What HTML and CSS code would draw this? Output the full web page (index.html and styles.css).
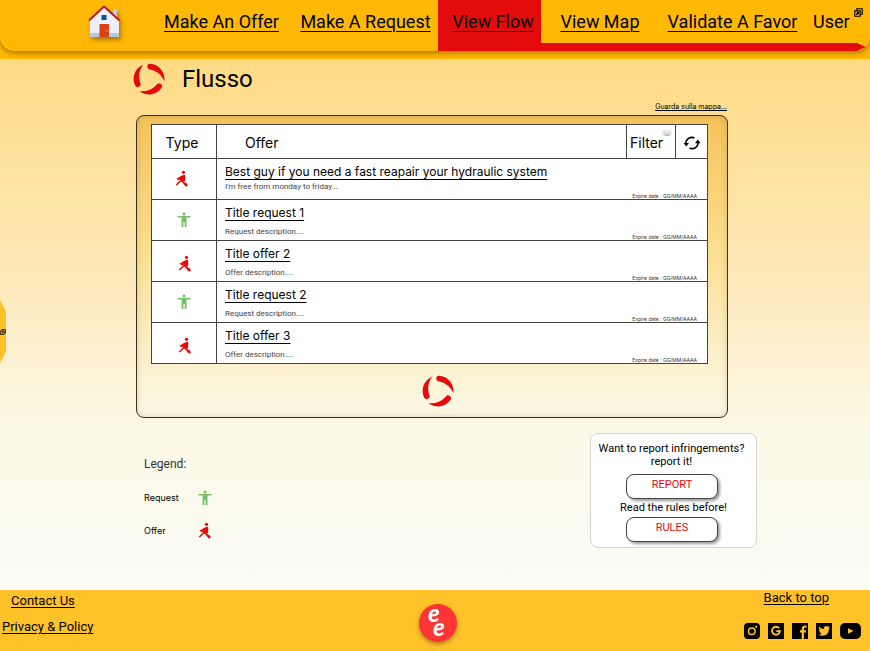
FILE: index.html
```html
<!DOCTYPE html>
<html lang="en">
<head>
<meta charset="utf-8">
<title>Flusso</title>
<link rel="stylesheet" href="styles.css">
</head>
<body>
<svg width="0" height="0" class="defs" aria-hidden="true">
  <symbol id="swirl" viewBox="0 0 32 32">
    <path id="blade" d="M17 .7A15.300 15.300 0 0 1 31.300 18Q27 8.800 17.500 6.500A2.900 2.900 0 0 1 17 .7Z"/>
    <use href="#blade" transform="rotate(120 16 16)"/>
    <use href="#blade" transform="rotate(240 16 16)"/>
  </symbol>
  <symbol id="person" viewBox="0 0 14 16">
    <circle cx="7" cy="2" r="1.500"/>
    <path d="M.5 4h13v1.500H9.500V15H7.700v-5H6.400v5H4.600V5.500H.5Z"/>
  </symbol>
  <symbol id="helper" viewBox="0 0 14 18">
    <circle cx="8.500" cy="2.300" r="1.600"/>
    <path d="M5.500 6.200 9 4.700Q10.200 4.600 10.200 6v4.500L9 11.500 5 9Z"/>
    <path d="M7 6.500 2.800 8.800 4.500 10M1.300 15 6 10.500" fill="none" stroke="currentColor" stroke-width="1.500"/>
    <path d="M4.700 8.600 11.200 15" fill="none" stroke="currentColor" stroke-width="1.800"/>
    <path d="M9 14.500 11 12.800 13 15.200 11 16.800Z"/>
  </symbol>
  <symbol id="windows" viewBox="0 0 8 8">
    <path d="M2.500 2V.7h4.800v4.800H6M.7 2.500h4.800v4.800H.7ZM2 6l2-2M2.500 4H4v1.500" fill="none" stroke="currentColor"/>
  </symbol>
</svg>

<header class="topbar">
  <nav class="nav">
    <a class="nav-item home" href="#" aria-label="Home">
      <svg width="34" height="36" viewBox="0 0 34 36">
        <path d="M25 4h4v10h-4Z" fill="#c2cae8"/>
        <path d="M2 15 16 2l15 13v17H2Z" fill="#edf0fb"/>
        <path d="M2 28h29v4H2Z" fill="#bcc5e4"/>
        <path d="M11.500 19h9.500v13h-9.500Z" fill="#d84315"/>
        <path d="M13.500 10h5v5h-5Z" fill="#01579b"/>
        <path d="M1 15.500 16 1.500l15.500 14" fill="none" stroke="#b71c1c" stroke-width="2"/>
        <circle cx="19" cy="26" r=".7" fill="#ffb74d"/>
      </svg>
    </a>
    <a class="nav-item" href="#">Make An Offer</a>
    <a class="nav-item" href="#">Make A Request</a>
    <a class="nav-item active" href="#">View Flow</a>
    <a class="nav-item lined" href="#">View Map</a>
    <a class="nav-item lined" href="#">Validate A Favor</a>
    <button class="nav-item last">User <svg width="9" height="9" class="mini"><use href="#windows"/></svg></button>
  </nav>
</header>

<button class="side-tab" aria-label="Open side menu"><svg width="6" height="6"><use href="#windows"/></svg></button>

<main class="content">
  <div class="heading">
    <svg class="swirl" width="32" height="32"><use href="#swirl"/></svg>
    <h1>Flusso</h1>
  </div>
  <a class="map-link" href="#">Guarda sulla mappa...</a>

  <section class="panel">
    <table class="flow">
      <colgroup><col class="c-type"><col><col class="c-filter"><col class="c-refresh"></colgroup>
      <thead>
        <tr>
          <th class="type-head">Type</th>
          <th class="offer-head">Offer</th>
          <th class="filter-cell"><button>Filter</button><i class="knob"></i></th>
          <th><button class="refresh" aria-label="Refresh">
            <svg width="18" height="14" viewBox="0 0 18 14" fill="none" stroke="#000" stroke-width="1.600">
              <path d="M3 7.500a6 5.500 0 0 1 8.500-5.600M15 6.500a6 5.500 0 0 1-8.500 5.600"/>
              <path d="M.5 7h5.500L3.200 10.500ZM12 7.200h5.500L14.800 3.500Z" fill="#000" stroke="none"/>
            </svg></button></th>
        </tr>
      </thead>
      <tbody>
        <tr><td class="type"><svg class="helper" width="14" height="18"><use href="#helper"/></svg></td>
          <td colspan="3"><div class="entry"><a href="#">Best guy if you need a fast reapair your hydraulic system</a><p class="near">I'm free from monday to friday...</p><small>Expire date : GG/MM/AAAA</small></div></td></tr>
        <tr><td class="type"><svg class="person" width="14" height="16"><use href="#person"/></svg></td>
          <td colspan="3"><div class="entry"><a href="#">Title request 1</a><p>Request description....</p><small>Expire date : GG/MM/AAAA</small></div></td></tr>
        <tr><td class="type low"><svg class="helper" width="14" height="18"><use href="#helper"/></svg></td>
          <td colspan="3"><div class="entry"><a href="#">Title offer 2</a><p>Offer description....</p><small>Expire date : GG/MM/AAAA</small></div></td></tr>
        <tr><td class="type"><svg class="person" width="14" height="16"><use href="#person"/></svg></td>
          <td colspan="3"><div class="entry"><a href="#">Title request 2</a><p>Request description....</p><small>Expire date : GG/MM/AAAA</small></div></td></tr>
        <tr><td class="type low"><svg class="helper" width="14" height="18"><use href="#helper"/></svg></td>
          <td colspan="3"><div class="entry"><a href="#">Title offer 3</a><p>Offer description....</p><small>Expire date : GG/MM/AAAA</small></div></td></tr>
      </tbody>
    </table>
    <svg class="swirl loader" width="32" height="32"><use href="#swirl"/></svg>
  </section>

  <div class="below">
    <section class="legend">
      <h2>Legend:</h2>
      <div class="legend-row"><span>Request</span><svg class="person" width="14" height="16"><use href="#person"/></svg></div>
      <div class="legend-row"><span>Offer</span><svg class="helper" width="14" height="18"><use href="#helper"/></svg></div>
    </section>
    <section class="report">
      <p class="question">Want to report infringements? report it!</p>
      <button>REPORT</button>
      <p>Read the rules before!</p>
      <button>RULES</button>
    </section>
  </div>
</main>

<footer class="footer">
  <div class="foot-links"><a class="contact" href="#">Contact Us</a><a href="#">Privacy &amp; Policy</a></div>
  <svg class="logo" width="38" height="42" viewBox="0 0 38 42">
    <circle cx="19" cy="19" r="19" fill="#ff3535"/>
    <text><tspan x="9" y="18">e</tspan><tspan x="14" y="32">e</tspan></text>
  </svg>
  <div class="foot-right">
    <a href="#">Back to top</a>
    <div class="social">
      <a href="#" aria-label="Instagram"><svg width="16" height="16" viewBox="0 0 16 16"><rect width="16" height="16" rx="4"/><circle cx="7.800" cy="8.200" r="3.300" fill="none" stroke="#ffc329" stroke-width="1.500"/><circle cx="12.200" cy="3.800" r="1.100" fill="#ffc329"/></svg></a>
      <a href="#" aria-label="Google"><svg width="16" height="16" viewBox="0 0 16 16"><rect width="16" height="16"/><path d="M11.200 5.300A4 4 0 1 0 12 8.200H8.300" fill="none" stroke="#ffc329" stroke-width="1.800"/></svg></a>
      <a href="#" aria-label="Facebook"><svg width="16" height="16" viewBox="0 0 16 16"><rect width="16" height="16"/><path d="M10.800 16V6q0-2.500 2.500-2.500h1.200M8 8.300h6" fill="none" stroke="#ffc329" stroke-width="2.200"/></svg></a>
      <a href="#" aria-label="Twitter"><svg width="16" height="16" viewBox="0 0 16 16"><rect width="16" height="16"/><path d="M3 3.500Q5.300 6 8 6 7.800 3 10.300 3 11.300 3 12 3.700L13.600 3.200 13 4.600 14 4.400 12.900 5.800Q12.800 12.600 6.500 12.700 4.500 12.700 2.700 11.700 4.700 11.700 5.700 10.800 4.200 10.700 3.700 9.300L4.700 9.200Q3 8.500 3 6.900L4 7.100Q2.300 5.700 3 3.500Z" fill="#ffc329"/></svg></a>
      <a href="#" aria-label="YouTube"><svg width="21" height="16" viewBox="0 0 21 16"><rect width="21" height="16" rx="5"/><path d="M8 5.200 13.500 8 8 10.800Z" fill="#ffc329"/></svg></a>
    </div>
  </div>
</footer>
</body>
</html>
```
FILE: styles.css
```css
* { box-sizing: border-box; }
body {
  margin: 0;
  min-height: 100vh;
  display: flex;
  flex-direction: column;
  font-family: Roboto, "Liberation Sans", sans-serif;
  color: #000;
  background: linear-gradient(#fdd675, #fdebc0 300px, #fbf8e7 430px, #fbfcf5 590px);
}
h1, h2, p { margin: 0; font-weight: 400; }
a { color: inherit; text-underline-offset: 2px; text-decoration-thickness: 1px; }
button { font: inherit; color: inherit; border: 0; background: none; padding: 0; cursor: pointer; }
svg { display: block; }
.defs { position: absolute; }

.topbar { height: 59px; background: #ffb703; }
.nav {
  height: 51px;
  display: grid;
  grid-template-columns: 150fr 143fr 145fr 103fr 118fr 147fr 64fr;
  background: #ffb905;
  border-radius: 0 0 14px 14px;
  box-shadow: 0 2px 5px rgba(80, 50, 0, .5);
  font-size: 18px;
  line-height: 22px;
}
.nav-item { padding-top: 11px; text-align: center; white-space: nowrap; text-underline-offset: 3px; }
.home { padding: 5px 0 0 88px; }
.home svg { filter: drop-shadow(2px 3px 2px rgba(90, 60, 0, .5)); }
.active { background: #e30b0b; padding-left: 7px; }
.lined { background: linear-gradient(#e30b0b, #e30b0b) bottom / 100% 8px no-repeat; }
.last {
  display: flex;
  align-items: flex-start;
  gap: 4px;
  padding-left: 7px;
  position: relative;
}
.last::after {
  content: "";
  position: absolute;
  left: 0;
  right: 4px;
  bottom: 0;
  height: 8px;
  background: #e30b0b;
  clip-path: polygon(0 0, calc(100% - 9px) 0, 100% 50%, calc(100% - 9px) 100%, 0 100%);
}
.mini { margin-top: -3px; }

.side-tab {
  position: absolute;
  left: 0;
  top: 300px;
  width: 6px;
  height: 63px;
  background: #ffc329;
  clip-path: polygon(0 0, 100% 18%, 100% 82%, 0 100%);
}

.content { flex: 1; padding: 4px 142px 0 136px; display: flex; flex-direction: column; }
.heading { display: flex; align-items: center; gap: 17px; height: 32px; margin-left: -3px; }
.heading h1 { font-size: 24px; line-height: 32px; }
.swirl { fill: #e30b0b; }
.map-link { align-self: flex-end; margin: 7px 1px 3px 0; font: 7px/10px Inter, sans-serif; text-underline-offset: 1px; }
.panel {
  border: 1px solid #39311f;
  border-radius: 8px;
  padding: 8px 19px 10px 14px;
  background: linear-gradient(#f5c25a, #fcdd8c 42%, #fbeec4 75%, #fbf8e7);
  box-shadow: inset 0 0 6px rgba(130, 90, 20, .25);
}
.flow {
  width: 100%;
  table-layout: fixed;
  border-collapse: collapse;
  background: #fff;
  font-family: Inter, sans-serif;
}
.c-type { width: 65px; }
.c-filter { width: 49px; }
.c-refresh { width: 32px; }
.flow th, .flow td { border: 1px solid #444; padding: 0; }
.flow th { height: 34px; padding-top: 2px; font-weight: 400; font-size: 14px; }
.flow .type-head { padding-right: 4px; }
.flow .offer-head { text-align: left; padding-left: 28px; }
.flow .filter-cell { position: relative; text-align: left; padding-left: 3px; }
.knob {
  position: absolute;
  right: 4px;
  top: 1px;
  width: 8px;
  height: 9px;
  border-radius: 0 0 4px 4px;
  background: linear-gradient(#fff 30%, #ccc);
  box-shadow: 0 1px 1px #999;
}
.refresh { display: block; margin: auto; }
.flow td { height: 41px; }
.type svg { margin: 0 auto; }
.type .helper { margin-left: 23px; }
.low .helper { margin: 6px 0 0 26px; }
.entry {
  height: 40px;
  padding: 4px 10px 0 8px;
  display: grid;
  grid-template-columns: 1fr auto;
  grid-template-rows: 18px 1fr;
}
.entry a { grid-column: 1 / 3; font-size: 12px; line-height: 17px; text-underline-offset: 3px; }
.entry p { align-self: end; font: 8px/10px Roboto, sans-serif; color: #444; padding-bottom: 3px; }
.entry .near { align-self: start; padding-top: 1px; }
.entry small { align-self: end; font-size: 5px; line-height: 6px; color: #333; }
.person { fill: #74bf68; }
.helper { fill: #e80606; color: #e80606; }
.panel .loader { position: relative; left: 8px; margin: 11px auto 0; }

.below { display: flex; justify-content: space-between; margin: 15px -29px 42px 8px; }
.legend { padding-top: 23px; }
.legend h2 { font-size: 12px; line-height: 16px; color: #333; }
.legend-row { display: flex; align-items: center; height: 18px; margin-top: 15px; font: 9px/12px Inter, sans-serif; }
.legend-row span { width: 54px; }
.legend h2 + .legend-row { margin-top: 17px; }
.report {
  width: 167px;
  height: 115px;
  padding: 8px 6px 0;
  border: 1px solid #d4d4d0;
  border-radius: 8px;
  background: #fff;
  text-align: center;
  font-size: 11px;
  line-height: 13px;
}
.question { padding: 0 4px 6px 0; }
.report button {
  display: block;
  width: 92px;
  height: 25px;
  margin: 3px auto 2px 29px;
  padding-bottom: 4px;
  border: 1px solid #444;
  border-radius: 8px;
  background: #fff;
  box-shadow: 2px 2px 3px rgba(0, 0, 0, .4);
  color: #e30b0b;
}
.question + button { margin-top: 0; }

.footer {
  height: 61px;
  display: grid;
  grid-template-columns: 1fr auto 1fr;
  background: #ffc329;
  font-size: 13px;
  line-height: 16px;
}
.foot-links { display: flex; flex-direction: column; gap: 10px; align-items: flex-start; padding: 3px 0 0 2px; }
.contact { margin-left: 9px; }
.logo { margin: 14px 0 0 5px; filter: drop-shadow(0 2px 2px rgba(90, 50, 0, .5)); }
.logo text { font: italic 900 24px Lato, sans-serif; fill: #fff; }
.foot-right { display: flex; flex-direction: column; align-items: flex-end; padding-right: 9px; }
.foot-right > a { margin-right: 32px; }
.social { display: flex; gap: 8px; margin-top: 17px; }
```
